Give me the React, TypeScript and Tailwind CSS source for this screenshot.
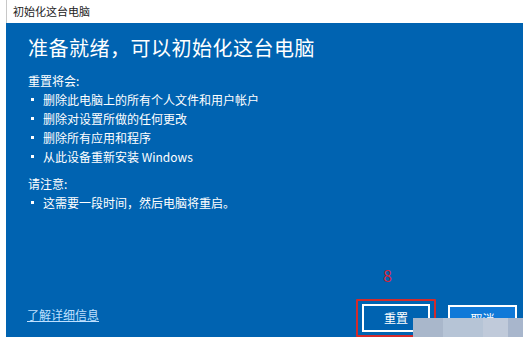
export default function App() {
  const items = [
    '删除此电脑上的所有个人文件和用户帐户',
    '删除对设置所做的任何更改',
    '删除所有应用和程序',
    '从此设备重新安装 Windows',
  ];
  const font = { fontFamily: '"Microsoft YaHei", "Noto Sans CJK SC", sans-serif' };

  return (
    <div className="w-[523px] h-[337px] bg-white overflow-hidden relative flex flex-col" style={font}>
      {/* title bar */}
      <div className="h-[23px] flex items-center pl-[6px] text-[11px] text-[#222] border-l border-[#c8c8c8] ml-[6px]">
        初始化这台电脑
      </div>

      {/* body */}
      <div className="flex-1 ml-[6px] bg-[#0063b1] text-white flex flex-col pl-[22px] pr-[6px]">
        <h1 className="text-[20px] leading-[28px] mt-[11px] tracking-[0.5px]">准备就绪，可以初始化这台电脑</h1>

        <div className="mt-[9px] text-[12px] leading-[19px]">
          <p>重置将会:</p>
          <ul className="mt-[0px]">
            {items.map(t => (
              <li key={t} className="flex items-center">
                <span className="w-[3px] h-[3px] bg-white mr-[9px] ml-[3px]" />
                {t}
              </li>
            ))}
          </ul>
          <p className="mt-[8px]">请注意:</p>
          <ul>
            <li className="flex items-center">
              <span className="w-[3px] h-[3px] bg-white mr-[9px] ml-[3px]" />
              这需要一段时间，然后电脑将重启。
            </li>
          </ul>
        </div>

        <div className="flex-1" />

        <div className="flex items-end justify-between pb-[4px]">
          <a className="text-[12px] text-[#bfe0ff] underline mb-[9px] -ml-[1px]">了解详细信息</a>
          <div className="flex items-end gap-[12px] relative">
            <span className="absolute left-[27px] -top-[36px] text-[16px] text-[#d4243a]">8</span>
            <div className="border-[2px] border-[#d22b2b] px-[4px] pt-[3px] pb-[3px] mb-[-4px] rounded-[1px]">
              <button className="w-[68px] h-[28px] border-[2px] border-white bg-[#0063b1] text-white text-[12px]">重置</button>
            </div>
            <button className="w-[69px] h-[28px] border-[2px] border-white bg-[#1079d8] text-white text-[12px]">取消</button>
          </div>
        </div>
      </div>

      {/* blurred overlay */}
      <div className="absolute left-[413px] top-[318px] w-[110px] h-[19px] flex">
        <div className="w-[30px] bg-[#a9b7cb]" />
        <div className="w-[40px] bg-[#b6c4d6]" />
        <div className="w-[25px] bg-[#c0cada]" />
        <div className="flex-1 bg-[#a8b6cc]" />
      </div>
    </div>
  );
}
